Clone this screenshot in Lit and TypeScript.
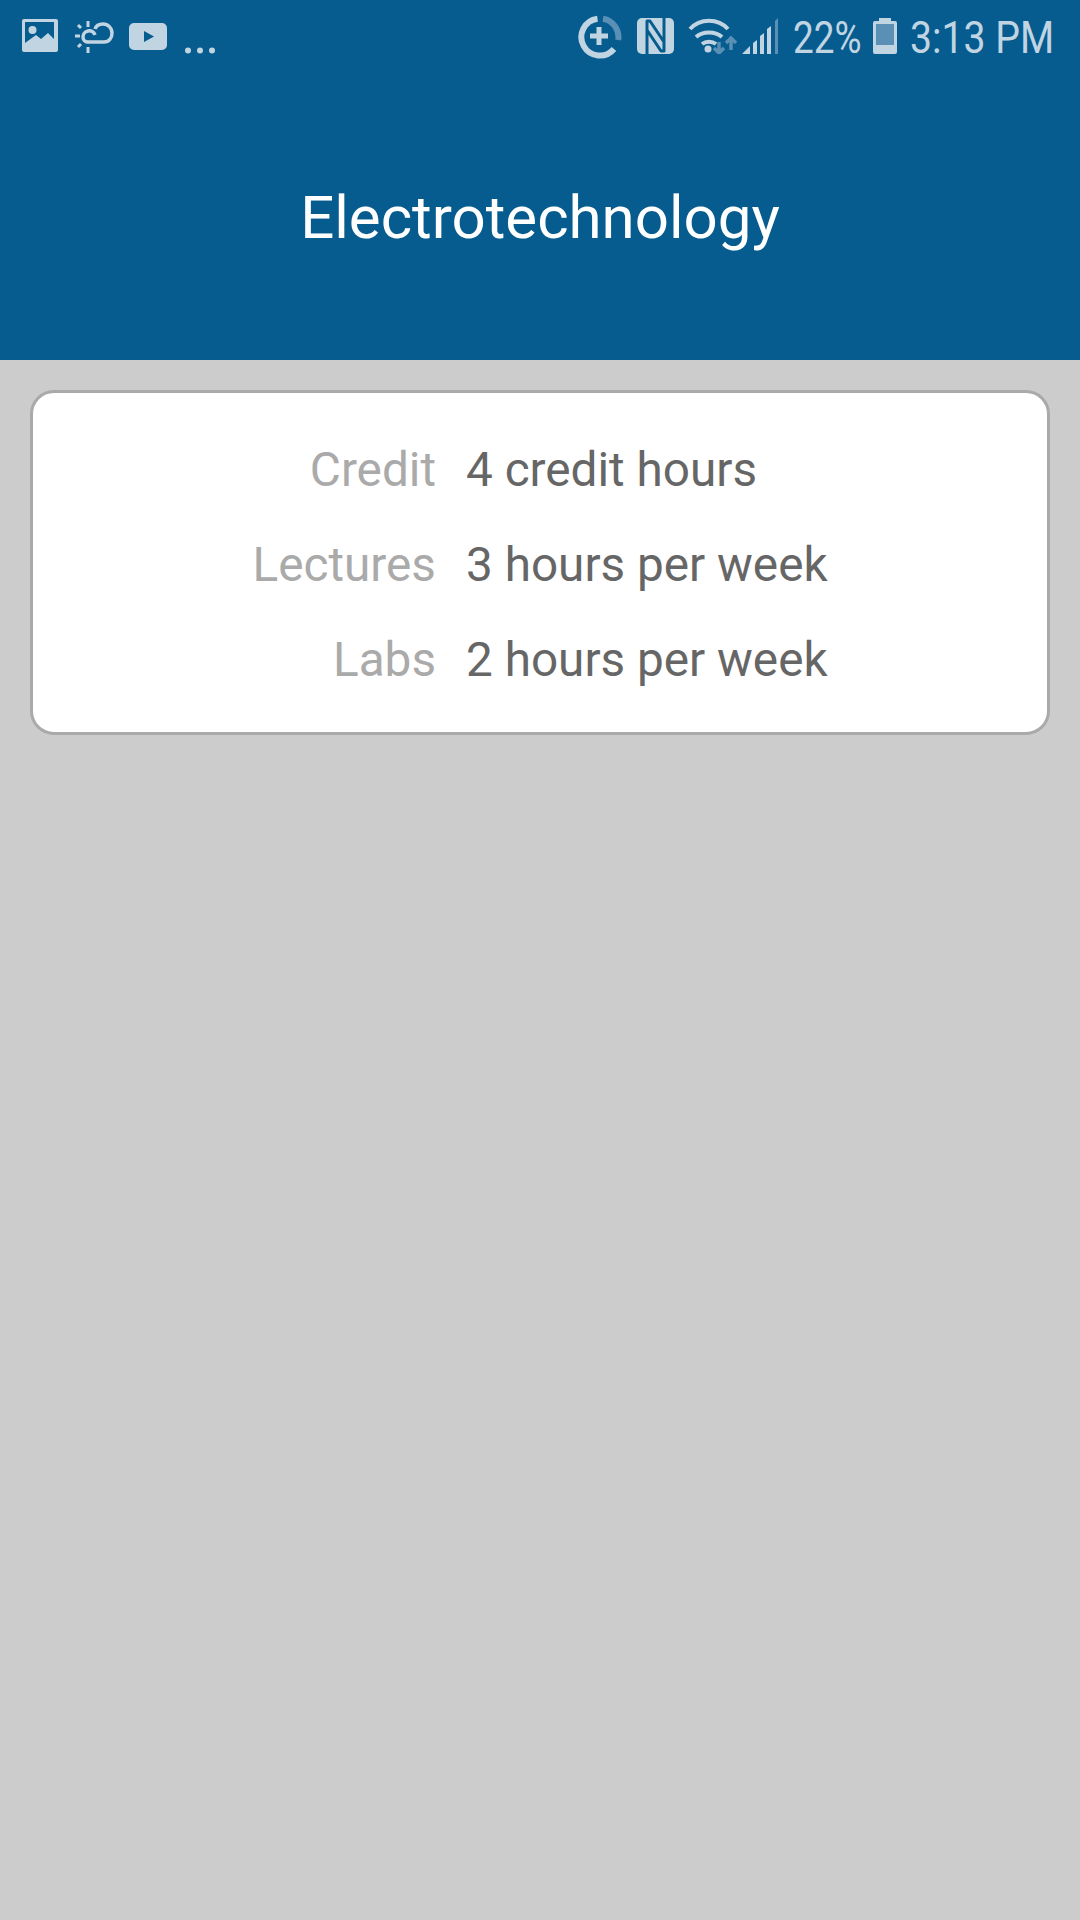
import { LitElement, html, css } from "lit";
import { customElement } from "lit/decorators.js";

const rows = [
  ["Credit", "4 credit hours"],
  ["Lectures", "3 hours per week"],
  ["Labs", "2 hours per week"],
];

@customElement("app-root")
export class AppRoot extends LitElement {
  static styles = css`
    :host { display: flex; flex-direction: column; width: 1080px; height: 1920px; background: #cccccc; font-family: Roboto, "Liberation Sans", sans-serif; overflow: hidden; }
    .header { height: 360px; background: #065c8e; display: flex; flex-direction: column; flex: none; }
    .status { height: 72px; display: flex; align-items: flex-start; color: #c1d4e2; }
    .status svg { display: block; flex: none; }
    .left { display: flex; align-items: flex-start; padding: 19px 0 0 22px; }
    .cloud { margin-left: 15px; margin-top: 1px; }
    .yt { margin-left: 14px; margin-top: 4px; }
    .dots { margin-left: 18px; margin-top: 28px; }
    .right { margin-left: auto; display: flex; align-items: flex-start; padding-top: 15px; padding-right: 26px; }
    .stxt { font-size: 45px; font-weight: 400; line-height: 46px; white-space: nowrap; display: inline-block; transform-origin: left center; color: #c1d4e2; }
    .pct { width: 70px; margin-left: 15px; transform: scaleX(0.82); }
    .time { width: 144px; margin-left: 13px; transform: scaleX(0.87); }
    .nfc { margin: 3px 0 0 15px; }
    .wifi { margin: 3px 0 0 14px; }
    .signal { margin: 3px 0 0 4px; }
    .batt { margin: 3px 0 0 10px; }
    .title { flex: 1; display: flex; align-items: center; justify-content: center; color: #fff; font-size: 60px; font-weight: 400; padding-top: 3px; }
    .card { margin: 30px 30px 0; background: #fff; border: 3px solid #aaaaaa; border-radius: 24px; padding: 29px 0 25px; display: flex; flex-direction: column; }
    .row { height: 95px; display: grid; grid-template-columns: 403px 1fr; column-gap: 30px; align-items: center; font-size: 47.7px; }
    .k { color: #aaaaaa; text-align: right; }
    .v { color: #666666; }
  `;

  render() {
    return html`
      <div class="header">
        <div class="status">
          <div class="left">
            <svg width="36" height="34" viewBox="0 0 36 34"><path fill="#c1d4e2" fill-rule="evenodd" d="M2 0h32a2 2 0 0 1 2 2v29a2 2 0 0 1-2 2H2a2 2 0 0 1-2-2V2a2 2 0 0 1 2-2zM3 3v21l11-8 5 4 7-6 6 6V3z"/><circle cx="10.500" cy="11" r="4" fill="#c1d4e2"/></svg>
            <svg class="cloud" width="42" height="34" viewBox="0 0 42 34" fill="none" stroke="#c1d4e2"><path stroke-width="3.500" d="M22 15c-1-3-4-5-7-4-3 .5-5 3-5 6s2.500 5 5 5h16c5 0 8-4 8-9s-4-9-9-9c-4 0-7 2-8 5"/><path stroke-width="3" d="M15 1v6M15 27v6M2 16h5M5 5l3 3M8 24l-3 3"/></svg>
            <svg class="yt" width="38" height="27" viewBox="0 0 38 27"><path fill="#c1d4e2" fill-rule="evenodd" d="M5 0h28a5 5 0 0 1 5 5v17a5 5 0 0 1-5 5H5a5 5 0 0 1-5-5V5a5 5 0 0 1 5-5zM15 8v11l10-5.500z"/></svg>
            <svg class="dots" width="30" height="7" viewBox="0 0 30 7" fill="#c1d4e2"><circle cx="3" cy="3.500" r="3"/><circle cx="15" cy="3.500" r="3"/><circle cx="27" cy="3.500" r="3"/></svg>
          </div>
          <div class="right">
            <svg width="44" height="44" viewBox="0 0 44 44" fill="none"><path stroke="#c1d4e2" stroke-width="6" d="M19.500 3.700A18.500 18.500 0 1 0 36 34"/><path stroke="#5a90b5" stroke-width="6" d="M25 3.700A18.500 18.500 0 0 1 40.200 25"/><path stroke="#c1d4e2" stroke-width="5" d="M21 12v18M12 21h18"/></svg>
            <svg class="nfc" width="37" height="36" viewBox="0 0 37 36"><rect width="37" height="36" rx="5" fill="#c1d4e2"/><path fill="none" stroke="#065c8e" stroke-width="3" stroke-linejoin="round" d="M10 36V3h3l14 21M27 0v33h-3L10 12"/></svg>
            <svg class="wifi" width="50" height="36" viewBox="0 0 50 36" fill="none"><path stroke="#c1d4e2" stroke-width="4" d="M2 11C12 0 30 0 40 11M8 19c7-6 19-6 26 0M14 26c4-3 10-3 14 0"/><circle cx="20" cy="31" r="3.500" fill="#c1d4e2"/><path stroke="#5a90b5" stroke-width="3.500" d="M31 24v11M26 30l5 5 5-5M43 32V20M38 25l5-5 5 5"/></svg>
            <svg class="signal" width="36" height="36" viewBox="0 0 36 36"><path fill="#c1d4e2" d="M0 36l8-8v8zM11 25l4-3v14h-4zM18 18l4-3v21h-4zM25 11l4-3v28h-4z"/><path fill="#5a90b5" d="M33 3l3-3v36h-3z"/></svg>
            <span class="stxt pct">22%</span>
            <svg class="batt" width="24" height="36" viewBox="0 0 24 36"><path fill="#c1d4e2" d="M6 0h12v3h4a2 2 0 0 1 2 2v29a2 2 0 0 1-2 2H2a2 2 0 0 1-2-2V5a2 2 0 0 1 2-2h4z"/><rect x="3" y="6" width="18" height="21" fill="#5a90b5"/></svg>
            <span class="stxt time">3:13 PM</span>
          </div>
        </div>
        <div class="title">Electrotechnology</div>
      </div>
      <div class="card">
        ${rows.map(([k, v]) => html`<div class="row"><div class="k">${k}</div><div class="v">${v}</div></div>`)}
      </div>
    `;
  }
}
